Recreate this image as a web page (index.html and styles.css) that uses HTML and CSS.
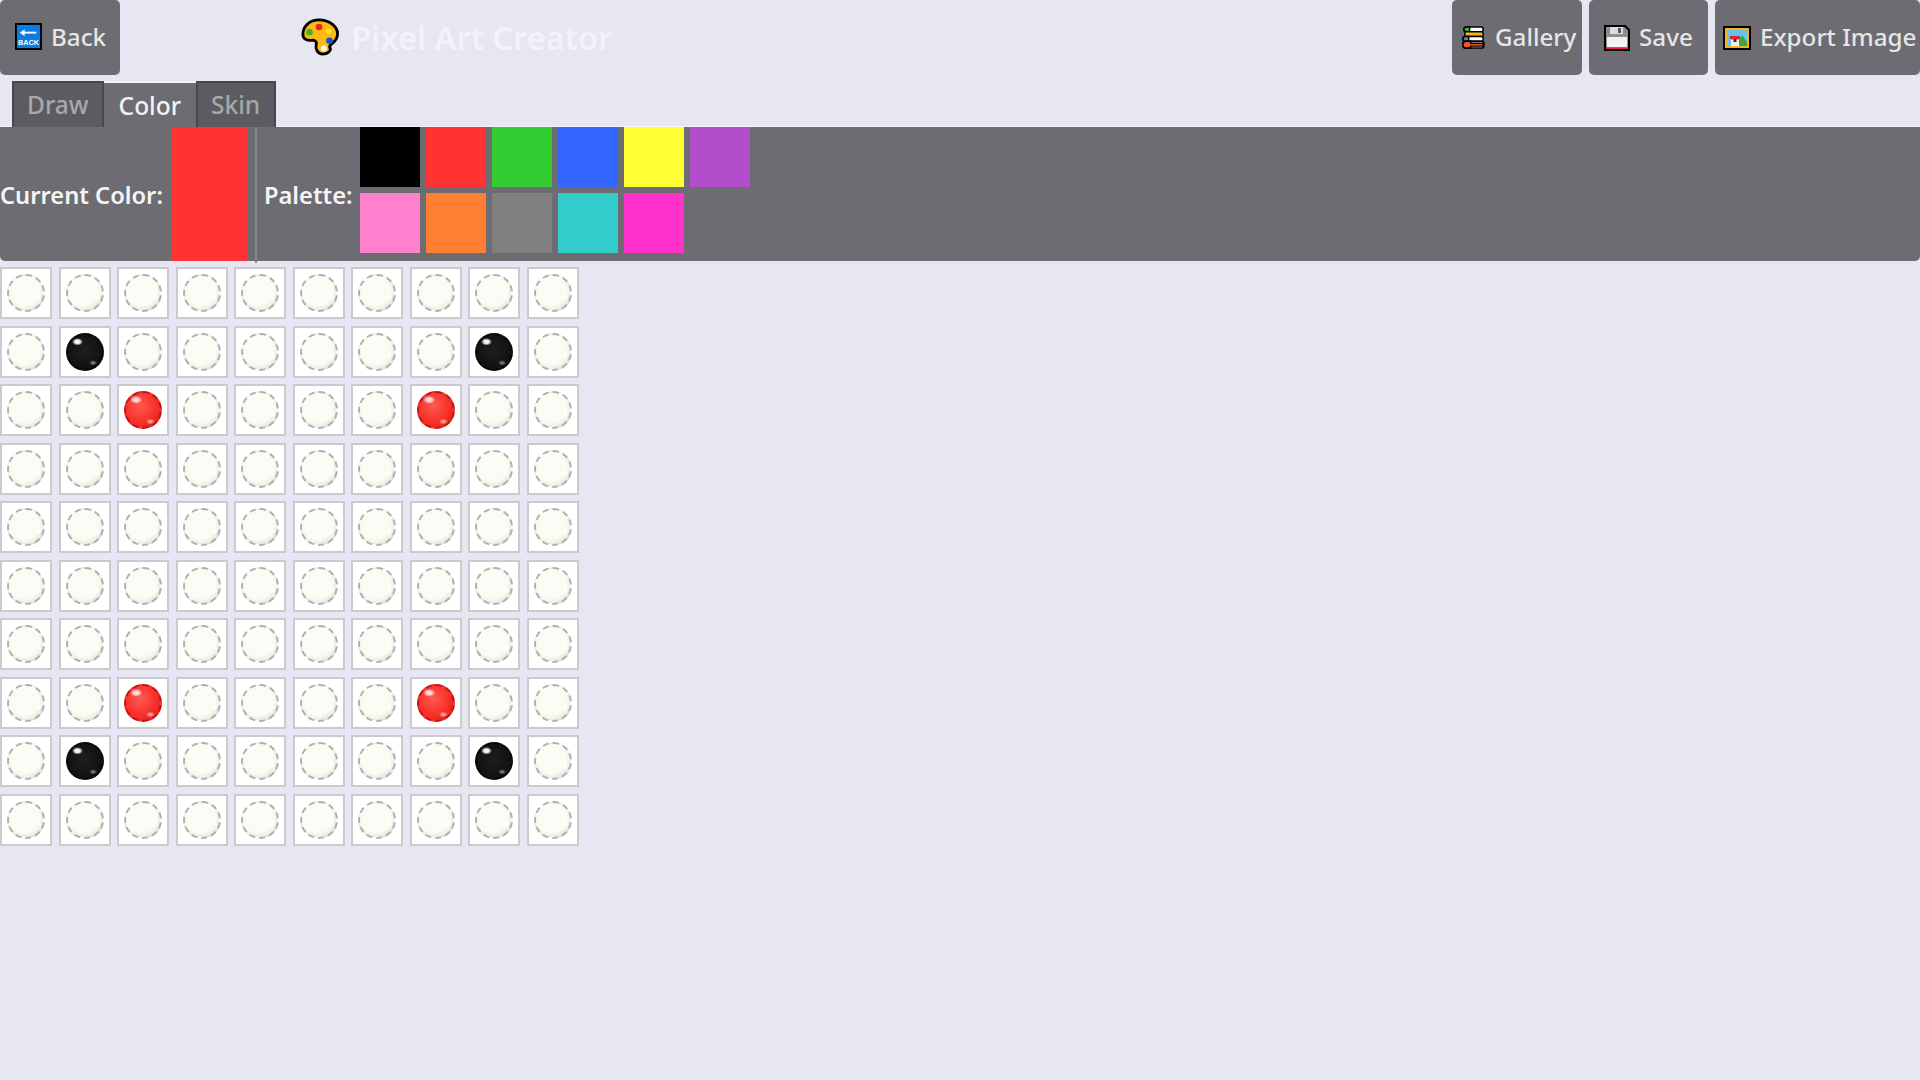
FILE: index.html
```html
<!DOCTYPE html>
<html lang="en">
<head>
<meta charset="utf-8">
<title>Pixel Art Creator</title>
<link rel="stylesheet" href="styles.css">
</head>
<body>
<header class="topbar">
  <div class="topbar-left">
    <button class="btn btn-back">
      <svg class="icon" viewBox="0 0 28 28"><rect x="1" y="1" width="26" height="26" fill="#0a7ce6" stroke="#000" stroke-width="2"/><path d="M7 10h15" stroke="#fff" stroke-width="2"/><path d="M5 10l5-3.500v7z" fill="#fff"/><text x="14" y="23" class="icon-text">BACK</text></svg>
      <span>Back</span>
    </button>
    <h1 class="title">
      <svg class="title-icon" viewBox="0 0 40 40"><path d="M19 2C8 2 2 10 2 17c0 5 4 7 8 6.500 4-.5 7 .5 6 4.500-1 4 1 10 7 10 5 0 8-3 8-5.500-1.500-2-1-3.500 1-5 4-3 6.500-6 6.500-11C38.500 9 30 2 19 2z" fill="#fdb813" stroke="#000" stroke-width="3" stroke-linejoin="round"/><circle cx="19" cy="9.500" r="3.500" fill="#e8261f"/><circle cx="9" cy="15" r="3.500" fill="#3cb521"/><circle cx="29" cy="14" r="3" fill="#ffe11c"/><circle cx="30" cy="24" r="3.500" fill="#1450d8"/><circle cx="24" cy="32" r="3" fill="#fff"/></svg>
      <span>Pixel Art Creator</span>
    </h1>
  </div>
  <div class="topbar-right">
    <button class="btn btn-gallery">
      <svg class="icon-books" viewBox="0 0 24 24"><g stroke="#000" stroke-width="1.500"><rect x="2" y="1" width="20" height="5" rx="2" fill="#fff"/><path d="M2 3.500a2.500 2.500 0 0 1 2.500-2.500H8v5H4.500A2.500 2.500 0 0 1 2 3.500z" fill="#39b51f"/><rect x="3" y="6" width="19" height="5" rx="1" fill="#f5b417"/><rect x="1" y="11" width="21" height="5" rx="2" fill="#fff"/><path d="M1 13.500A2.500 2.500 0 0 1 3.500 11H7v5H3.500A2.500 2.500 0 0 1 1 13.500z" fill="#2b8fe0"/><rect x="1" y="16" width="22" height="7" rx="2.500" fill="#fff"/><path d="M1 19.500A3.500 3.500 0 0 1 4.500 16H9v2h13v3H9v2H4.500A3.500 3.500 0 0 1 1 19.500z" fill="#ee5a1a"/></g></svg>
      <span>Gallery</span>
    </button>
    <button class="btn btn-save">
      <svg class="icon-floppy" viewBox="0 0 26 26"><path d="M1 1h20l4 4v20H1z" fill="#8e8e8e" stroke="#000" stroke-width="2"/><rect x="6" y="2" width="13" height="7" fill="#dcdcdc"/><rect x="14" y="3" width="3" height="5" fill="#555"/><rect x="3" y="12" width="20" height="10" fill="#f2f2f2"/><rect x="2" y="22.500" width="22" height="1.500" fill="#e8184f"/></svg>
      <span>Save</span>
    </button>
    <button class="btn btn-export">
      <svg class="icon-frame" viewBox="0 0 28 24"><rect x="1" y="1" width="26" height="22" fill="#f2b51d" stroke="#000" stroke-width="2"/><rect x="4" y="4" width="20" height="16" fill="#6cc0ee"/><path d="M13 20l6-11 5 7v4z" fill="#3aa93a"/><path d="M8 14h8v6H8z" fill="#f2f2f2"/><path d="M7 10h10v3H7z" fill="#e0252b"/><path d="M10.500 13h3v3h-3z" fill="#333"/></svg>
      <span>Export Image</span>
    </button>
  </div>
</header>
<nav class="tabs">
  <div class="tab">Draw</div>
  <div class="tab tab-active">Color</div>
  <div class="tab">Skin</div>
</nav>
<section class="panel">
  <span class="label">Current Color:</span>
  <div class="current-swatch"></div>
  <div class="divider"></div>
  <span class="label label-palette">Palette:</span>
  <div class="palette">
    <div class="swatch c-black"></div><div class="swatch c-red"></div><div class="swatch c-green"></div><div class="swatch c-blue"></div><div class="swatch c-yellow"></div><div class="swatch c-purple"></div>
    <div class="swatch c-pink"></div><div class="swatch c-orange"></div><div class="swatch c-gray"></div><div class="swatch c-cyan"></div><div class="swatch c-magenta"></div>
  </div>
</section>
<main class="grid">
  <div class="cell"><i class="bead"></i></div><div class="cell"><i class="bead"></i></div><div class="cell"><i class="bead"></i></div><div class="cell"><i class="bead"></i></div><div class="cell"><i class="bead"></i></div><div class="cell"><i class="bead"></i></div><div class="cell"><i class="bead"></i></div><div class="cell"><i class="bead"></i></div><div class="cell"><i class="bead"></i></div><div class="cell"><i class="bead"></i></div>
  <div class="cell"><i class="bead"></i></div><div class="cell"><i class="bead bead-black"></i></div><div class="cell"><i class="bead"></i></div><div class="cell"><i class="bead"></i></div><div class="cell"><i class="bead"></i></div><div class="cell"><i class="bead"></i></div><div class="cell"><i class="bead"></i></div><div class="cell"><i class="bead"></i></div><div class="cell"><i class="bead bead-black"></i></div><div class="cell"><i class="bead"></i></div>
  <div class="cell"><i class="bead"></i></div><div class="cell"><i class="bead"></i></div><div class="cell"><i class="bead bead-red"></i></div><div class="cell"><i class="bead"></i></div><div class="cell"><i class="bead"></i></div><div class="cell"><i class="bead"></i></div><div class="cell"><i class="bead"></i></div><div class="cell"><i class="bead bead-red"></i></div><div class="cell"><i class="bead"></i></div><div class="cell"><i class="bead"></i></div>
  <div class="cell"><i class="bead"></i></div><div class="cell"><i class="bead"></i></div><div class="cell"><i class="bead"></i></div><div class="cell"><i class="bead"></i></div><div class="cell"><i class="bead"></i></div><div class="cell"><i class="bead"></i></div><div class="cell"><i class="bead"></i></div><div class="cell"><i class="bead"></i></div><div class="cell"><i class="bead"></i></div><div class="cell"><i class="bead"></i></div>
  <div class="cell"><i class="bead"></i></div><div class="cell"><i class="bead"></i></div><div class="cell"><i class="bead"></i></div><div class="cell"><i class="bead"></i></div><div class="cell"><i class="bead"></i></div><div class="cell"><i class="bead"></i></div><div class="cell"><i class="bead"></i></div><div class="cell"><i class="bead"></i></div><div class="cell"><i class="bead"></i></div><div class="cell"><i class="bead"></i></div>
  <div class="cell"><i class="bead"></i></div><div class="cell"><i class="bead"></i></div><div class="cell"><i class="bead"></i></div><div class="cell"><i class="bead"></i></div><div class="cell"><i class="bead"></i></div><div class="cell"><i class="bead"></i></div><div class="cell"><i class="bead"></i></div><div class="cell"><i class="bead"></i></div><div class="cell"><i class="bead"></i></div><div class="cell"><i class="bead"></i></div>
  <div class="cell"><i class="bead"></i></div><div class="cell"><i class="bead"></i></div><div class="cell"><i class="bead"></i></div><div class="cell"><i class="bead"></i></div><div class="cell"><i class="bead"></i></div><div class="cell"><i class="bead"></i></div><div class="cell"><i class="bead"></i></div><div class="cell"><i class="bead"></i></div><div class="cell"><i class="bead"></i></div><div class="cell"><i class="bead"></i></div>
  <div class="cell"><i class="bead"></i></div><div class="cell"><i class="bead"></i></div><div class="cell"><i class="bead bead-red"></i></div><div class="cell"><i class="bead"></i></div><div class="cell"><i class="bead"></i></div><div class="cell"><i class="bead"></i></div><div class="cell"><i class="bead"></i></div><div class="cell"><i class="bead bead-red"></i></div><div class="cell"><i class="bead"></i></div><div class="cell"><i class="bead"></i></div>
  <div class="cell"><i class="bead"></i></div><div class="cell"><i class="bead bead-black"></i></div><div class="cell"><i class="bead"></i></div><div class="cell"><i class="bead"></i></div><div class="cell"><i class="bead"></i></div><div class="cell"><i class="bead"></i></div><div class="cell"><i class="bead"></i></div><div class="cell"><i class="bead"></i></div><div class="cell"><i class="bead bead-black"></i></div><div class="cell"><i class="bead"></i></div>
  <div class="cell"><i class="bead"></i></div><div class="cell"><i class="bead"></i></div><div class="cell"><i class="bead"></i></div><div class="cell"><i class="bead"></i></div><div class="cell"><i class="bead"></i></div><div class="cell"><i class="bead"></i></div><div class="cell"><i class="bead"></i></div><div class="cell"><i class="bead"></i></div><div class="cell"><i class="bead"></i></div><div class="cell"><i class="bead"></i></div>
</main>
</body>
</html>
```

FILE: styles.css
```css
* { box-sizing: border-box; }

html, body {
  margin: 0;
  height: 100%;
}

body {
  background: #e6e7f3;
  font-family: "Noto Sans", "Open Sans", sans-serif;
  overflow: hidden;
}

.topbar {
  display: flex;
  justify-content: space-between;
  height: 75px;
}

.topbar-left,
.topbar-right {
  display: flex;
  align-items: stretch;
}

.topbar-right { gap: 7px; }

.btn {
  display: flex;
  align-items: center;
  gap: 9px;
  height: 75px;
  padding: 0 0 2px 15px;
  border: 0;
  border-radius: 5px;
  background: #6c6c72;
  color: #e6e6e6;
  font: 500 24.200px "Noto Sans", "Open Sans", sans-serif;
  white-space: nowrap;
}

.btn-back { width: 120px; }
.btn-gallery { width: 130px; padding-left: 10px; gap: 10px; }
.btn-save { width: 119px; gap: 9px; }
.btn-export { width: 205px; padding-left: 8px; }

.icon { width: 27px; height: 27px; flex: none; }
.icon-books { width: 23px; height: 23px; flex: none; margin-top: 2px; }
.icon-floppy { width: 26px; height: 26px; flex: none; margin-top: 2px; }
.icon-frame { width: 28px; height: 24px; flex: none; margin-top: 2px; }

.icon-text {
  font: 700 7.500px "Liberation Sans", sans-serif;
  fill: #fff;
  text-anchor: middle;
}

.title {
  display: flex;
  align-items: center;
  gap: 12px;
  margin: 0 0 0 181px;
  padding-bottom: 1px;
  font-size: 32.600px;
  font-weight: 600;
  color: #f2f2f8;
}

.title-icon { width: 38px; height: 38px; }

.tabs {
  display: flex;
  align-items: flex-end;
  height: 52px;
  padding-left: 12px;
}

.tab {
  display: flex;
  align-items: center;
  justify-content: center;
  height: 46px;
  padding: 0 13px 2px;
  border: 2px solid #47474d;
  border-bottom: 0;
  background: #5b5b61;
  color: #a8a8a8;
  font-size: 24.500px;
  font-weight: 500;
}

.tab-active {
  height: 44px;
  border: 0;
  padding: 0 15px;
  background: #6c6c72;
  color: #f2f2f2;
  box-shadow: 0 -2px 0 #f3f3fa;
}

.tab:last-child { padding-right: 14px; }

.panel {
  display: flex;
  align-items: center;
  height: 134px;
  border-radius: 0 0 5px 5px;
  background: #6c6c72;
  box-shadow: 0 -1px 0 #f3f3fa;
}

.label {
  font-size: 23.700px;
  font-weight: 600;
  color: #f5f5f5;
  padding-right: 8px;
  padding-top: 1px;
}

.label-palette { margin-left: 7px; padding-right: 7px; }

.current-swatch {
  align-self: stretch;
  width: 76px;
  background: #ff3333;
}

.divider {
  align-self: stretch;
  width: 2px;
  margin: 0 0 -2px 8px;
  background: #85858a;
}

.palette {
  align-self: flex-start;
  display: grid;
  grid-template-columns: repeat(6, 60px);
  grid-auto-rows: 60px;
  gap: 6px;
}

.c-black { background: #000; }
.c-red { background: #ff3333; }
.c-green { background: #33cc33; }
.c-blue { background: #3366ff; }
.c-yellow { background: #ffff33; }
.c-purple { background: #b34dcc; }
.c-pink { background: #ff80cc; }
.c-orange { background: #ff8033; }
.c-gray { background: #808080; }
.c-cyan { background: #33cccc; }
.c-magenta { background: #ff33cc; }

.grid {
  display: grid;
  grid-template-columns: repeat(10, 52px);
  grid-auto-rows: 52px;
  gap: 6.500px;
  margin-top: 6px;
}

.cell {
  display: flex;
  align-items: center;
  justify-content: center;
  border: 2px solid #cbcbce;
  background: #fff;
}

.bead {
  display: block;
  width: 38px;
  height: 38px;
  border: 2px dashed #b0b0ae;
  border-radius: 50%;
  background:
    radial-gradient(ellipse 9% 14% at 86% 62%, #fff 0, transparent 100%),
    radial-gradient(circle at 45% 42%, #fdfdf8 0%, #fbfbf3 56%, #ecece4 72%, #cfcfc7 86%, #e4e4dd 100%);
  background-clip: border-box;
  filter: blur(.3px);
}

.bead-red {
  border-color: #c01414;
  background:
    radial-gradient(ellipse 18% 12% at 30% 20%, #ffe8e8 0, #ffc8c8 50%, transparent 100%),
    radial-gradient(ellipse 14% 9% at 72% 84%, #ffc0b8 0, transparent 100%),
    radial-gradient(circle at 42% 38%, #ff5a50 0%, #f8302a 55%, #d21a1a 100%);
}

.bead-black {
  border-color: #050505;
  background:
    radial-gradient(ellipse 16% 11% at 28% 20%, #fff 0, #e8e8e8 50%, transparent 100%),
    radial-gradient(ellipse 12% 8% at 74% 82%, #999 0, transparent 100%),
    radial-gradient(circle at 48% 45%, #1e1e1e 0%, #111 70%, #000 100%);
}
```
